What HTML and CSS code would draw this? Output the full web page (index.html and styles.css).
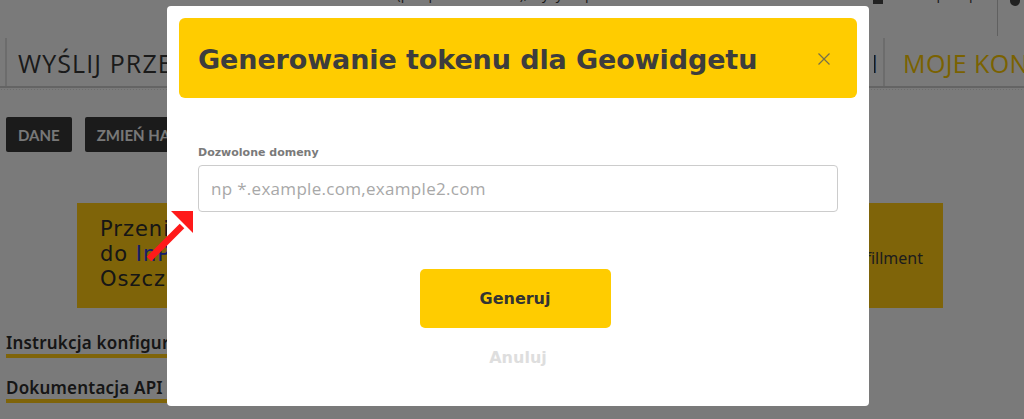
FILE: index.html
```html
<!DOCTYPE html>
<html lang="pl">
<head>
<meta charset="utf-8">
<title>Generowanie tokenu</title>
<link rel="stylesheet" href="styles.css">
</head>
<body>
<div class="page">
  <div class="topbar">
    <span class="top-left">Infolinia: 22 122 12 12 (pn.–pt. 8:00–20:00), wysyłka paczek i kurier</span>
    <span class="top-right"><span class="mail-ico"></span>info@inpost.pl<span class="top-sep"></span><span class="db-ico"></span></span>
  </div>
  <nav class="nav">
    <div class="nav-item first">WYŚLIJ PRZESYŁKĘ</div>
    <div class="nav-item mid">USŁUGI</div>
    <div class="nav-item gold">MOJE KONTO</div>
  </nav>
  <div class="dots"></div>
  <div class="tabs">
    <span class="tab">DANE</span>
    <span class="tab">ZMIEŃ HASŁO</span>
  </div>
  <div class="promo">
    <div class="promo-text">Przenieś się<br>do <span class="blue">InPost</span> Pay<br>Oszczędzaj</div>
    <div class="promo-right">Fulfillment</div>
  </div>
  <div class="links">
    <a class="doc-link">Instrukcja konfiguracji Geowidgetu</a>
    <a class="doc-link">Dokumentacja API</a>
  </div>
</div>

<div class="overlay"></div>

<div class="modal">
  <div class="modal-head">
    <h1 class="modal-title">Generowanie tokenu dla Geowidgetu</h1>
    <svg class="close" width="14" height="14" viewBox="0 0 14 14"><path d="M1.5 1.5 L12.5 12.5 M12.5 1.5 L1.5 12.5" stroke="#77704a" stroke-width="1.2" fill="none"/></svg>
  </div>
  <div class="modal-body">
    <label class="field-label">Dozwolone domeny</label>
    <input class="field" type="text" placeholder="np *.example.com,example2.com">
    <div class="actions">
      <button class="btn-primary">Generuj</button>
      <span class="btn-cancel">Anuluj</span>
    </div>
  </div>
</div>

<svg class="arrow" width="60" height="62" viewBox="0 0 60 62">
  <line x1="3" y1="57" x2="36" y2="24" stroke="#ff1a1a" stroke-width="6.5"/>
  <polygon points="25,9 47,9 47,31" fill="#ff1a1a"/>
</svg>
</body>
</html>
```
FILE: styles.css
```css
* { box-sizing: border-box; }
html, body { margin: 0; padding: 0; }
body {
  width: 1024px;
  height: 419px;
  overflow: hidden;
  background: #f4f4f4;
  font-family: "Open Sans", "Liberation Sans", sans-serif;
  position: relative;
}
.page { width: 1024px; }
.topbar {
  height: 38px;
  position: relative;
  display: flex;
  justify-content: space-between;
  font-size: 14px;
  color: #333;
  overflow: hidden;
}
.top-left { margin-top: -16px; margin-left: 250px; white-space: nowrap; }
.top-right { margin-top: -16px; display: flex; align-items: flex-start; gap: 4px; margin-right: 4px; white-space: nowrap; }
.mail-ico { width: 10px; height: 20px; background: #444; margin-top: 0; }
.top-sep { width: 1px; height: 36px; background: #c0c0c0; margin: 16px 8px 0 12px; }
.db-ico { width: 10px; height: 22px; border-radius: 5px; background: #444; }

.nav {
  height: 50px;
  display: flex;
  align-items: stretch;
  border-bottom: 2px solid #c8c8c8;
  font-family: "Open Sans", sans-serif;
  font-size: 25px;
  letter-spacing: 1.1px;
  color: #353535;
  overflow: hidden;
}
.nav-item {
  display: flex;
  align-items: center;
  padding-top: 2px;
  white-space: nowrap;
  flex-shrink: 0;
}
.nav-item.first {
  margin-left: 5px;
  border-left: 2px solid #d8d8d8;
  padding-left: 11px;
  width: 869px;
}
.nav-item.mid { width: 9px; overflow: hidden; justify-content: flex-end; padding-right: 4px; }
.nav-item.gold {
  color: #f5c400;
  border-left: 2px solid #d8d8d8;
  padding-left: 18px;
  letter-spacing: 0.4px;
}
.dots {
  height: 4px;
  background-image: radial-gradient(#dadada 0.8px, transparent 0.9px);
  background-size: 3px 3px;
}
.tabs {
  display: flex;
  gap: 13px;
  padding: 25px 6px 0;
}
.tab {
  height: 35px;
  display: flex;
  align-items: center;
  padding: 0 12px;
  background: #363636;
  color: #f0f0f0;
  border-radius: 2px;
  font-family: "Lato", sans-serif;
  font-size: 15px;
  font-weight: 700;
}
.promo {
  margin: 51px 0 0 77px;
  width: 866px;
  height: 105px;
  background: #ffc812;
  display: flex;
  align-items: center;
  justify-content: space-between;
  padding: 0 20px 0 23px;
}
.promo-text {
  font-family: "DejaVu Sans", sans-serif;
  font-size: 21px;
  letter-spacing: 1px;
  line-height: 25px;
  color: #2c2c2c;
  margin-top: -2px;
}
.blue { color: #2a3bd6; }
.promo-right {
  font-family: "Noto Sans", sans-serif;
  font-size: 16px;
  color: #3a3a3a;
  margin-top: 4px;
}
.links {
  display: flex;
  flex-direction: column;
  gap: 18px;
  padding: 23px 6px 0;
}
.doc-link {
  align-self: flex-start;
  font-family: "Noto Sans", sans-serif;
  font-weight: 600;
  font-size: 17px;
  letter-spacing: 0.2px;
  color: #2c2c2c;
  line-height: 23px;
  border-bottom: 4px solid #ffc812;
  width: 600px;
}

.overlay {
  position: absolute;
  inset: 0;
  background: rgba(0, 0, 0, 0.5);
}

.modal {
  position: absolute;
  left: 167px;
  top: 6px;
  width: 702px;
  height: 400px;
  background: #fff;
  border-radius: 4px;
  padding: 12px;
}
.modal-head {
  height: 80px;
  background: #ffcc00;
  border-radius: 6px;
  display: flex;
  align-items: center;
  justify-content: space-between;
  padding: 0 26px 0 19px;
}
.modal-title {
  margin: 0;
  padding-top: 2px;
  font-family: "DejaVu Sans", sans-serif;
  font-weight: 700;
  font-size: 27px;
  letter-spacing: -0.1px;
  color: #3d3d3d;
}
.close { display: block; margin-top: 1px; }
.modal-body {
  padding: 48px 19px 0;
  display: flex;
  flex-direction: column;
}
.field-label {
  font-family: "DejaVu Sans", sans-serif;
  font-size: 11px;
  font-weight: 700;
  color: #7a7a7a;
  line-height: 14px;
}
.field {
  margin-top: 5px;
  width: 640px;
  height: 47px;
  border: 1px solid #cccccc;
  border-radius: 4px;
  padding: 0 12px;
  font-family: "Open Sans", sans-serif;
  font-size: 17px;
  letter-spacing: 0.3px;
  color: #333;
  outline: none;
}
.field::placeholder { color: #a8a8a8; }
.actions {
  display: flex;
  flex-direction: column;
  align-items: center;
  margin-top: 57px;
  margin-left: -6px;
}
.btn-primary {
  width: 191px;
  height: 59px;
  border: none;
  border-radius: 5px;
  background: #ffcc00;
  font-family: "DejaVu Sans", sans-serif;
  font-weight: 700;
  font-size: 16px;
  color: #333;
}
.btn-cancel {
  margin-top: 20px;
  margin-left: 6px;
  font-family: "DejaVu Sans", sans-serif;
  font-weight: 700;
  font-size: 16px;
  color: #dedede;
}

.arrow {
  position: absolute;
  left: 146px;
  top: 202px;
}
```
